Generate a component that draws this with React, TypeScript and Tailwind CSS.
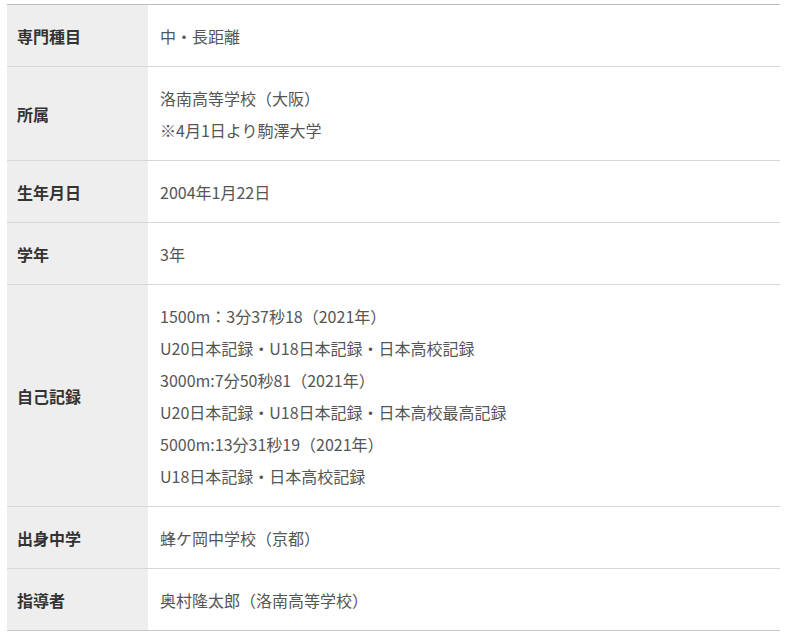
const rows: { label: string; values: string[] }[] = [
  { label: "専門種目", values: ["中・長距離"] },
  { label: "所属", values: ["洛南高等学校（大阪）", "※4月1日より駒澤大学"] },
  { label: "生年月日", values: ["2004年1月22日"] },
  { label: "学年", values: ["3年"] },
  {
    label: "自己記録",
    values: [
      "1500m：3分37秒18（2021年）",
      "U20日本記録・U18日本記録・日本高校記録",
      "3000m:7分50秒81（2021年）",
      "U20日本記録・U18日本記録・日本高校最高記録",
      "5000m:13分31秒19（2021年）",
      "U18日本記録・日本高校記録",
    ],
  },
  { label: "出身中学", values: ["蜂ケ岡中学校（京都）"] },
  { label: "指導者", values: ["奥村隆太郎（洛南高等学校）"] },
]

export default function App() {
  return (
    <div className="min-h-screen bg-white pt-[4px] pl-[7px] font-['Noto_Sans_CJK_JP','Noto_Sans',sans-serif]">
      <div className="w-[773px] border-t border-b border-t-[#bdbdbd] border-b-[#c8c8c8]">
        {rows.map((row, i) => (
          <div
            key={row.label}
            className={`flex ${i > 0 ? "border-t border-[#d6d6d6]" : ""}`}
          >
            <div className="w-[141px] shrink-0 bg-[#eeeeee] pl-[10px] flex items-center text-[16px] font-bold text-[#333333]">
              {row.label}
            </div>
            <div className="flex-1 pl-[12px] py-[14.5px] text-[16px] leading-[32px] text-[#555555]">
              {row.values.map((v) => (
                <div key={v}>{v}</div>
              ))}
            </div>
          </div>
        ))}
      </div>
    </div>
  )
}
